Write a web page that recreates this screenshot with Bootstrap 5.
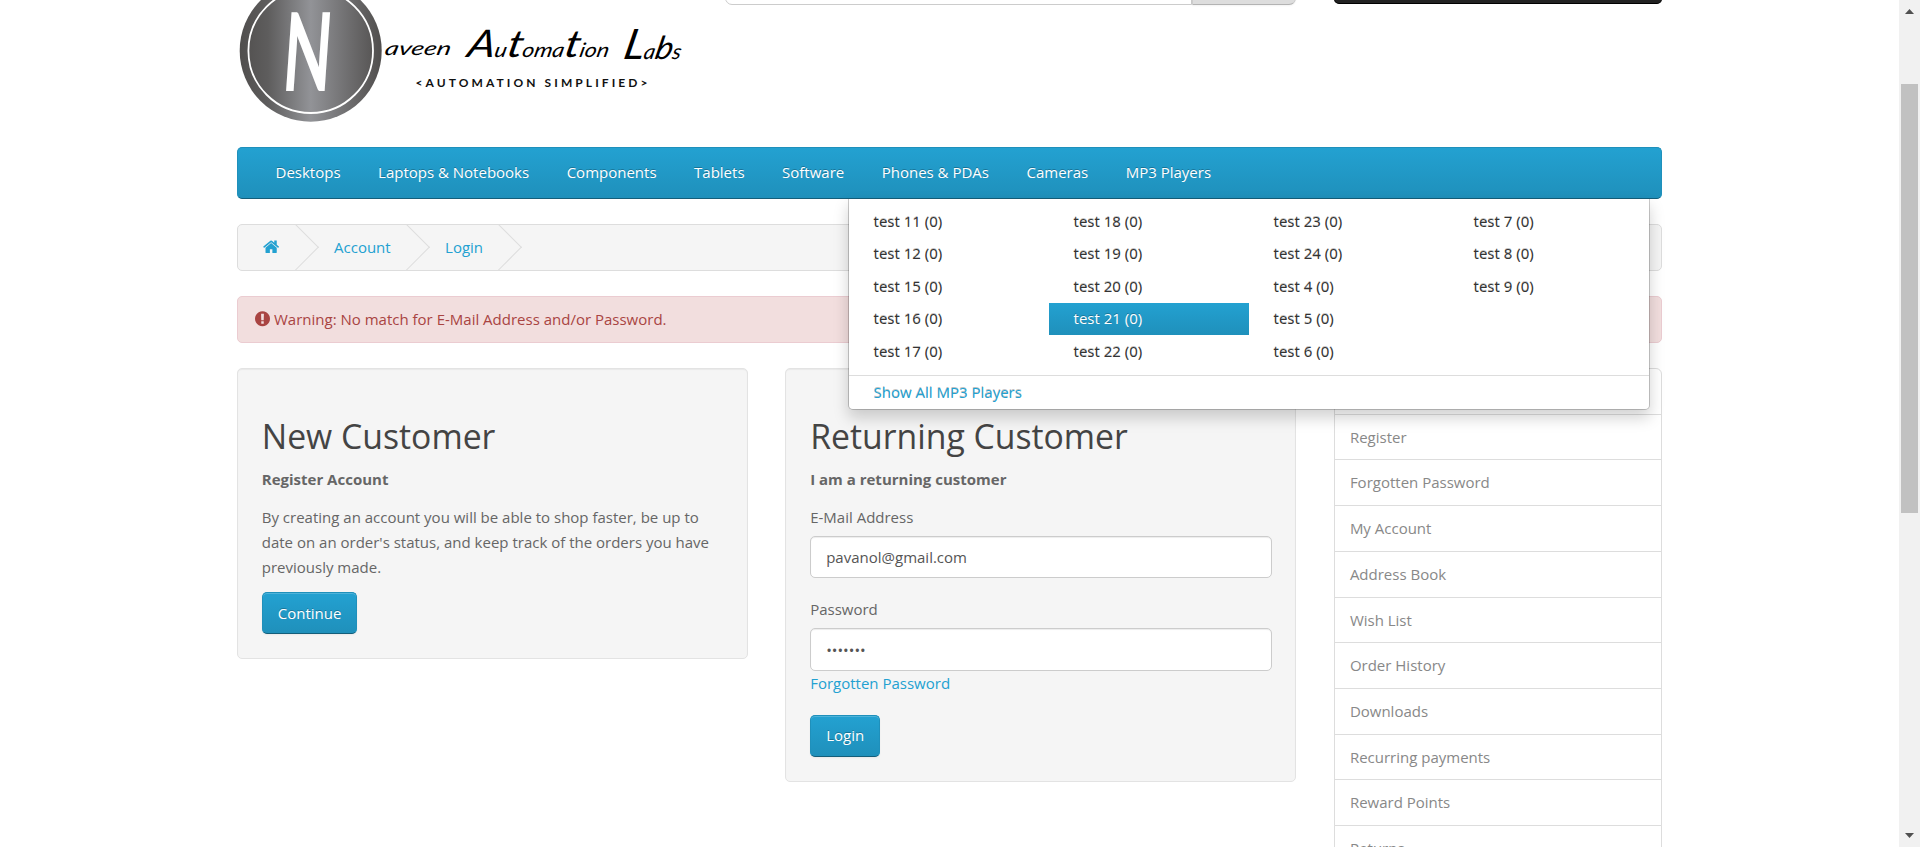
<!DOCTYPE html>
<html lang="en">
<head>
<meta charset="utf-8">
<title>Account Login</title>
<link href="https://cdn.jsdelivr.net/npm/bootstrap@5.3.0/dist/css/bootstrap.min.css" rel="stylesheet">
<style>
  body { font: 400 15px/25px "Open Sans", sans-serif; color: #666; background: #fff; }
  a { color: #23a1d1; text-decoration: none; }
  .shop { width: 1462.5px; max-width: none; padding: 0 18.75px; }
  .shop .row { --bs-gutter-x: 37.5px; }
  .masthead { height: 147px; }
  .masthead svg { display: block; }
  .search-col { width: 609.375px; margin-left: -121.875px; }
  .search-field, .search-go, .cart-go { height: 50px; margin-top: -45px; }
  .search-field { border: 1px solid #ccc; border-radius: 7px 0 0 7px; box-shadow: inset 0 1px 1px rgba(0,0,0,.075); }
  .search-go { width: 104.5px; background: #ddd; border: 1px solid #ccc; border-bottom-color: #b3b3b3; border-radius: 0 7px 7px 0; box-shadow: 0 1px 2px rgba(0,0,0,.05); }
  .cart-go { margin-top: -46px; background: #222; border: 1px solid #040404; border-bottom-color: #000; border-radius: 5px; }
  .blue-fill { background: #229ac8 linear-gradient(#23a1d1, #1f90bb); color: #fff; text-shadow: 0 -1px 0 rgba(0,0,0,.25); }
  .main-menu { height: 52px; padding: 0 18.75px; border: 1px solid; border-color: #1f90bb #1f90bb #145e7a; border-radius: 5px; margin-bottom: 25px; }
  .main-menu .nav-link { padding: 11.5px 18.75px 13.5px; color: #fff; }
  .mega { display: block; top: 51px; left: 610px; width: 802px; padding: 6px 0 0; border: 1px solid #bbb; border-color: rgba(0,0,0,.2); border-top: 0; border-radius: 0 0 5px 5px; box-shadow: 0 7.5px 15px rgba(0,0,0,.175); font-size: 15px; z-index: 5; }
  .mega ul { width: 200px; }
  .mega li { height: 32.5px; padding: 3.75px 24.6px; color: #333; }
  .mega li.blue-fill { color: #fff; height: 32px; margin-bottom: .5px; }
  .mega .all-link { border-top: 1px solid #ddd; margin-top: 7px; padding: 4px 24.6px; display: block; }
  .crumbs { height: 47px; border: 1px solid #ddd; background: #f5f5f5; border-radius: 5px; margin-bottom: 25px; padding: 0 0 0 .4px; overflow: hidden; gap: 4.4px; }
  .crumbs li { padding: 0 25px; position: relative; line-height: 45px; height: 45px; }
  .crumbs li::after { content: ""; position: absolute; right: -6.75px; top: 6px; width: 32.5px; height: 32.5px; border-right: 1px solid #ddd; border-bottom: 1px solid #ddd; transform: rotate(-45deg); }
  .crumbs svg { fill: #23a1d1; display: block; margin-top: 13px; }
  .warn { padding: 10px 17.5px; border: 1px solid #ebccd1; background: #f2dede; color: #a94442; border-radius: 5px; margin-bottom: 25px; line-height: 25px; gap: 4px; }
  .warn svg { fill: #a94442; margin: 3px 0 0 -.5px; }
  .well-box { border: 1px solid #e3e3e3; background: #f5f5f5; border-radius: 5px; padding: 23.75px 23.75px 24.2px; box-shadow: inset 0 1px 1px rgba(0,0,0,.05); }
  .well-box h2 { font-size: 33.75px; line-height: 37.1px; margin: 25.4px 0 12.1px; color: #444; font-weight: 400; }
  .well-box p { margin-bottom: 12.5px; }
  .well-box label { display: block; margin-bottom: 6.25px; }
  .well-box .next-field { margin-top: 18.75px; }
  .field { font-size: 15px; line-height: 21.4px; height: 42.2px; padding: 9.4px 15px; color: #555; border: 1px solid #ccc; border-radius: 5px; box-shadow: inset 0 1px 1px rgba(0,0,0,.075); }
  .field[type=password] { height: 42.8px; line-height: 22px; }
  .forgot { display: block; margin-bottom: 18.75px; }
  .act { display: inline-block; font-size: 15px; line-height: 21.4px; height: 41.8px; padding: 9.2px 15px; border: 1px solid; border-color: #1f90bb #1f90bb #145e7a; border-radius: 5px; box-shadow: inset 0 1px 0 rgba(255,255,255,.2), 0 1px 2px rgba(0,0,0,.05); vertical-align: top; }
  .act:hover { color: #fff; }
  .side .list-group-item { border: 1px solid #ddd; margin-bottom: -1.29px; padding: 10px 15px; color: #888; background: #fff; }
  .rail { width: 21px; background: #f1f1f1; }
  .rail svg { display: block; fill: #505050; }
  .thumb { height: 429px; width: 17px; background: #c1c1c1; margin: 70px 2px 0; }
</style>
</head>
<body class="d-flex vh-100 overflow-hidden">
<div class="flex-grow-1 overflow-hidden">
  <div class="container shop">
    <header class="masthead row overflow-hidden">
      <div class="col-5">
        <svg width="460" height="130" viewBox="237 0 460 130" aria-label="Naveen Automation Labs">
          <defs>
            <linearGradient id="steel"><stop offset="0" stop-color="#504e4d"/><stop offset=".2" stop-color="#5e5d5d"/><stop offset=".5" stop-color="#929397"/><stop offset=".8" stop-color="#6a696a"/><stop offset="1" stop-color="#504e4d"/></linearGradient>
          </defs>
          <circle cx="310.7" cy="50.7" r="71" fill="url(#steel)"/>
          <circle cx="310.7" cy="50.7" r="62.3" fill="none" stroke="#fff" stroke-width="1.8"/>
          <text transform="translate(281 91) skewX(-4) scale(.58 1)" font-family="Lato" font-weight="700" font-size="109" fill="#fff">N</text>
          <g font-family="Lato" font-style="italic" font-weight="400" fill="#000">
            <text transform="translate(384 55) skewX(-12)" font-size="19" textLength="66" lengthAdjust="spacingAndGlyphs">aveen</text>
            <text transform="translate(466 57) skewX(-12)" font-size="20" textLength="142" lengthAdjust="spacingAndGlyphs"><tspan font-size="38">A</tspan>u<tspan font-size="38">t</tspan>oma<tspan font-size="38">t</tspan>ion</text>
            <text transform="translate(622 59) skewX(-12)" font-size="21" textLength="58" lengthAdjust="spacingAndGlyphs"><tspan font-size="42">L</tspan>a<tspan font-size="32">b</tspan>s</text>
          </g>
          <text x="415.5" y="87.3" font-family="Lato" font-weight="700" font-size="12" fill="#111" textLength="232">&lt;AUTOMATION SIMPLIFIED&gt;</text>
        </svg>
      </div>
      <div class="search-col d-flex">
        <div class="search-field flex-grow-1"></div><div class="search-go"></div>
      </div>
      <div class="col-3"><div class="cart-go"></div></div>
    </header>

    <nav class="main-menu blue-fill position-relative">
      <ul class="nav">
        <li><a class="nav-link" href="#">Desktops</a></li>
        <li><a class="nav-link" href="#">Laptops &amp; Notebooks</a></li>
        <li><a class="nav-link" href="#">Components</a></li>
        <li><a class="nav-link" href="#">Tablets</a></li>
        <li><a class="nav-link" href="#">Software</a></li>
        <li><a class="nav-link" href="#">Phones &amp; PDAs</a></li>
        <li><a class="nav-link" href="#">Cameras</a></li>
        <li><a class="nav-link" href="#">MP3 Players</a></li>
      </ul>
      <div class="dropdown-menu mega">
        <div class="d-flex">
          <ul class="list-unstyled mb-0"><li>test 11 (0)</li><li>test 12 (0)</li><li>test 15 (0)</li><li>test 16 (0)</li><li>test 17 (0)</li></ul>
          <ul class="list-unstyled mb-0"><li>test 18 (0)</li><li>test 19 (0)</li><li>test 20 (0)</li><li class="blue-fill">test 21 (0)</li><li>test 22 (0)</li></ul>
          <ul class="list-unstyled mb-0"><li>test 23 (0)</li><li>test 24 (0)</li><li>test 4 (0)</li><li>test 5 (0)</li><li>test 6 (0)</li></ul>
          <ul class="list-unstyled mb-0"><li>test 7 (0)</li><li>test 8 (0)</li><li>test 9 (0)</li></ul>
        </div>
        <a class="all-link" href="#">Show All MP3 Players</a>
      </div>
    </nav>

    <ul class="crumbs d-flex list-unstyled">
      <li><svg width="16.25" height="17.5" viewBox="64 0 1664 1792"><path d="M1472 992v480q0 26-19 45t-45 19h-384v-384h-256v384h-384q-26 0-45-19t-19-45v-480q0-1 .5-3t.5-3l575-474 575 474q1 2 1 6zm223-69l-62 74q-8 9-21 11h-3q-13 0-21-7l-692-577-692 577q-12 8-24 7-13-2-21-11l-62-74q-8-10-7-23.5t11-21.5l719-599q32-26 76-26t76 26l244 204v-195q0-14 9-23t23-9h192q14 0 23 9t9 23v408l219 182q10 8 11 21.5t-7 23.5z"/></svg></li>
      <li><a href="#">Account</a></li>
      <li><a href="#">Login</a></li>
    </ul>

    <div class="warn d-flex"><svg width="15" height="17.5" viewBox="128 0 1536 1792"><path d="M896 128q209 0 385.5 103t279.5 279.5 103 385.5-103 385.5-279.5 279.5-385.5 103-385.5-103-279.5-279.5-103-385.5 103-385.5 279.5-279.5 385.5-103zm128 1247v-190q0-14-9-23.5t-22-9.5h-192q-13 0-23 10t-10 23v190q0 13 10 23t23 10h192q13 0 22-9.5t9-23.5zm-2-344l18-621q0-12-10-18-10-8-24-8h-220q-14 0-24 8-10 6-10 18l17 621q0 10 10 17.5t24 7.5h185q14 0 23.5-7.5t10.5-17.5z"/></svg><span>Warning: No match for E-Mail Address and/or Password.</span></div>

    <div class="row">
      <main class="col-9">
        <div class="row align-items-start">
          <div class="col-6">
            <section class="well-box">
              <h2>New Customer</h2>
              <p><strong>Register Account</strong></p>
              <p>By creating an account you will be able to shop faster, be up to date on an order's status, and keep track of the orders you have previously made.</p>
              <a class="act blue-fill" href="#">Continue</a>
            </section>
          </div>
          <div class="col-6">
            <section class="well-box">
              <h2>Returning Customer</h2>
              <p><strong>I am a returning customer</strong></p>
              <label for="mail">E-Mail Address</label>
              <input id="mail" class="form-control field" type="text" value="pavanol@gmail.com">
              <label for="pass" class="next-field">Password</label>
              <input id="pass" class="form-control field" type="password" value="1234567">
              <a class="forgot" href="#">Forgotten Password</a>
              <button class="act blue-fill" type="button">Login</button>
            </section>
          </div>
        </div>
      </main>
      <aside class="col-3 side">
        <div class="list-group">
          <a class="list-group-item" href="#">Login</a>
          <a class="list-group-item" href="#">Register</a>
          <a class="list-group-item" href="#">Forgotten Password</a>
          <a class="list-group-item" href="#">My Account</a>
          <a class="list-group-item" href="#">Address Book</a>
          <a class="list-group-item" href="#">Wish List</a>
          <a class="list-group-item" href="#">Order History</a>
          <a class="list-group-item" href="#">Downloads</a>
          <a class="list-group-item" href="#">Recurring payments</a>
          <a class="list-group-item" href="#">Reward Points</a>
          <a class="list-group-item" href="#">Returns</a>
        </div>
      </aside>
    </div>
  </div>
</div>
<div class="rail d-flex flex-column flex-shrink-0">
  <svg width="21" height="14"><path d="M6 14l4.5-5 4.5 5z"/></svg>
  <div class="thumb"></div>
  <svg class="mt-auto" width="21" height="14"><path d="M6 0l4.5 5 4.5-5z"/></svg>
</div>
<script src="https://cdn.jsdelivr.net/npm/bootstrap@5.3.0/dist/js/bootstrap.bundle.min.js"></script>
</body>
</html>
